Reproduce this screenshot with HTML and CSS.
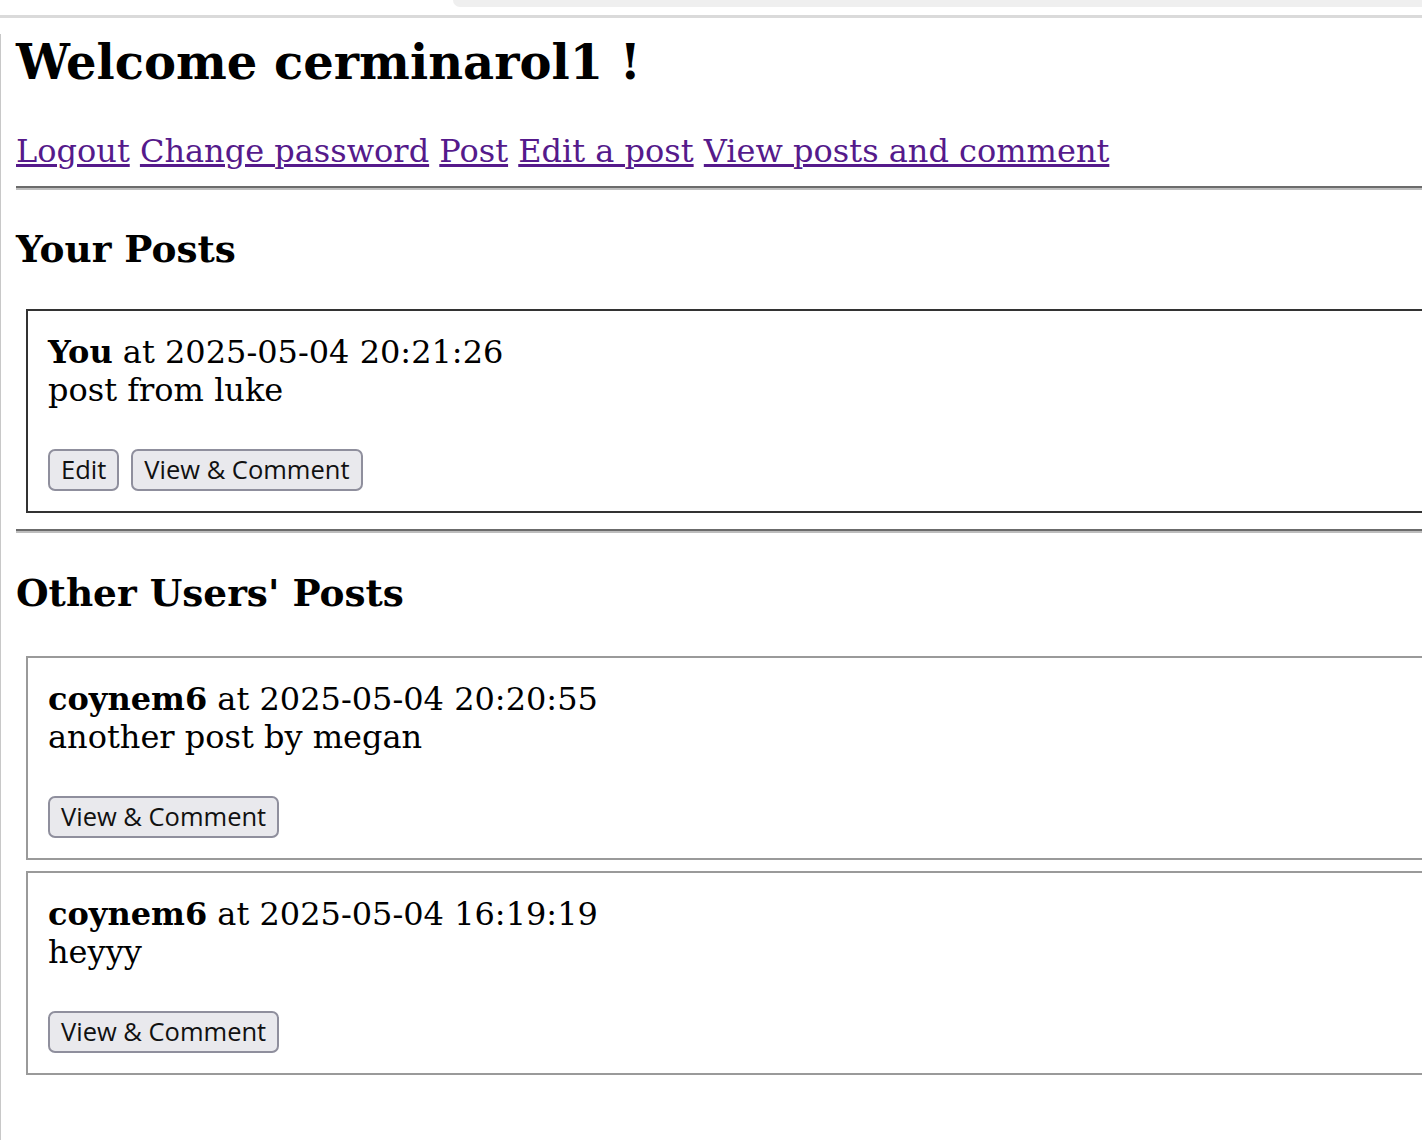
FILE: index.html
```html
<!DOCTYPE html>
<html lang="en">
<head>
<meta charset="utf-8">
<title>Home</title>
<link rel="stylesheet" href="styles.css">
</head>
<body>
<div class="chrome"><div class="chrome-tab"></div></div>
<main class="page">
  <div class="content">
    <h1 class="welcome">Welcome cerminarol1 !</h1>
    <nav class="links">
      <a href="#" class="link">Logout</a>
      <a href="#" class="link">Change password</a>
      <a href="#" class="link">Post</a>
      <a href="#" class="link">Edit a post</a>
      <a href="#" class="link">View posts and comment</a>
    </nav>
    <hr class="rule">
    <h3 class="section-title">Your Posts</h3>
    <div class="post post-own">
      <div class="post-meta"><strong class="author">You</strong> at 2025-05-04 20:21:26</div>
      <div class="post-body">post from luke</div>
      <div class="post-actions">
        <button class="btn btn-edit" type="button">Edit</button>
        <button class="btn btn-view" type="button">View &amp; Comment</button>
      </div>
    </div>
    <hr class="rule rule-second">
    <h3 class="section-title section-title-other">Other Users' Posts</h3>
    <div class="post post-other">
      <div class="post-meta"><strong class="author">coynem6</strong> at 2025-05-04 20:20:55</div>
      <div class="post-body">another post by megan</div>
      <div class="post-actions">
        <button class="btn btn-view" type="button">View &amp; Comment</button>
      </div>
    </div>
    <div class="post post-other post-last">
      <div class="post-meta"><strong class="author">coynem6</strong> at 2025-05-04 16:19:19</div>
      <div class="post-body">heyyy</div>
      <div class="post-actions">
        <button class="btn btn-view" type="button">View &amp; Comment</button>
      </div>
    </div>
  </div>
</main>
</body>
</html>
```
FILE: styles.css
```css
html, body {
  margin: 0;
  padding: 0;
  overflow: hidden;
  background: #ffffff;
}

body {
  font-family: "DejaVu Serif", serif;
  font-size: 32px;
  color: #000;
  height: 1140px;
}

.chrome {
  height: 15px;
  border-bottom: 3px solid #dadada;
  display: flex;
}

.chrome-tab {
  margin-left: 453px;
  flex: 1;
  height: 7px;
  background: #efefef;
  border-bottom-left-radius: 7px;
}

.page {
  border-left: 1px solid #c8c8c8;
  min-height: 1122px;
  padding-left: 15px;
}

.content {
  width: 1600px;
}

.welcome {
  font-size: 48px;
  font-weight: bold;
  line-height: normal;
  margin: 16px 0 42px;
}

.links {
  line-height: normal;
}

.link {
  color: #551a8b;
  text-decoration: underline;
}

.rule {
  height: 0;
  border: none;
  border-top: 2px solid #6b6b6b;
  border-bottom: 2px solid #bdbdbd;
  margin: 16px 0;
}

.section-title {
  font-size: 37.44px;
  font-weight: bold;
  line-height: normal;
  margin: 37.44px 0;
}

.section-title-other {
  margin-top: 38.5px;
  margin-bottom: 40.5px;
}

.post {
  margin: 10px 0 10px 10px;
  padding: 22px 20px 20px;
  border: 2px solid #333;
}

.post-other {
  border-color: #9a9a9a;
}

.post-last {
  margin-top: 11px;
}

.post-meta,
.post-body {
  line-height: normal;
}

.author {
  font-weight: bold;
}

.post-actions {
  display: flex;
  gap: 12px;
  margin-top: 40px;
}

.btn {
  box-sizing: border-box;
  font-family: "Open Sans", "Noto Sans", sans-serif;
  font-size: 25.5px;
  color: #111;
  background: #e9e9ed;
  border: 2px solid #8f8f9d;
  border-radius: 7px;
  height: 42px;
  padding: 0 11px;
  line-height: 1;
  display: flex;
  align-items: center;
}
```
